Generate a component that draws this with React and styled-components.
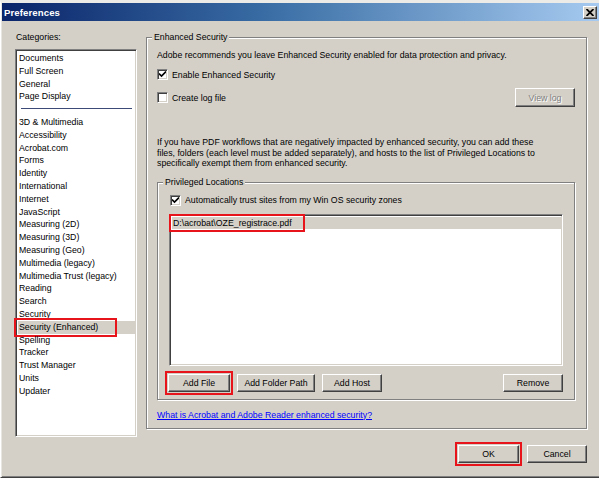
import React from 'react';
import styled, { createGlobalStyle } from 'styled-components';

const GlobalStyle = createGlobalStyle`
  html, body {
    margin: 0;
    padding: 0;
    background: #d4d0c8;
  }
  body {
    font-family: "Liberation Sans", Arial, sans-serif;
    font-size: 8.75px;
    color: #000;
  }
  * { box-sizing: border-box; }
`;

const Window = styled.div`
  width: 599px;
  height: 478px;
  display: flex;
  flex-direction: column;
  background: #d4d0c8;
  border-top: 3px solid #ecebe7;
  border-left: 1px solid #fff;
  border-bottom: 1px solid #404040;
  box-shadow: inset 1px 0 0 #e8e6e0, inset 0 -1px 0 #808080;
  padding-left: 1px;
  overflow: hidden;
`;

const TitleBar = styled.div`
  height: 18px;
  flex: none;
  display: flex;
  align-items: center;
  justify-content: space-between;
  padding: 0 2px 0 2px;
  background: linear-gradient(to right, #0a246a 0%, #3a6ea5 45%, #a6caf0 100%);
`;

const Title = styled.span`
  color: #fff;
  font-weight: bold;
  font-size: 9.6px;
  letter-spacing: 0.1px;
`;

const CloseButton = styled.div`
  width: 14px;
  height: 13px;
  display: flex;
  align-items: center;
  justify-content: center;
  background: #d4d0c8;
  border: 1px solid;
  border-color: #fff #404040 #404040 #fff;
  box-shadow: inset -1px -1px 0 #808080;
`;

const Body = styled.div`
  flex: 1;
  display: flex;
  gap: 9px;
  padding: 11px 12px 0 13px;
`;

const Sidebar = styled.div`
  width: 122px;
  flex: none;
  display: flex;
  flex-direction: column;
`;

const Label = styled.div`
  height: 11px;
  line-height: 11px;
  padding-left: 1px;
`;

const Sunken = styled.div`
  background: #fff;
  border: 1px solid;
  border-color: #808080 #fff #fff #808080;
  box-shadow: inset 1px 1px 0 #404040, inset -1px -1px 0 #d4d0c8;
`;

const CategoryList = styled(Sunken)`
  margin-top: 6px;
  height: 388px;
  padding: 2px 1px 0 2px;
`;

const CategoryItem = styled.div`
  height: 12.8px;
  line-height: 12.8px;
  padding-left: 1px;
  white-space: nowrap;
  background: ${p => (p.$selected ? '#d4d0c8' : 'transparent')};
`;

const Separator = styled.div`
  height: 12.8px;
  display: flex;
  align-items: center;
  padding: 0 3px 0 3px;
  &::after {
    content: '';
    flex: 1;
    height: 1px;
    margin-top: -3px;
    background: #3c4a78;
  }
`;

/* red annotation frame drawn round an item */
const Marked = styled.span`
  display: inline-block;
  padding: 0 ${p => p.$right}px 0 ${p => p.$left}px;
  margin-left: -${p => p.$left}px;
  outline: 2px solid #e8141b;
  outline-offset: 1px;
`;

const Main = styled.div`
  flex: 1;
  display: flex;
  flex-direction: column;
  padding-top: 5px;
`;

const GroupBox = styled.div`
  position: relative;
  border: 1px solid #808080;
  box-shadow: inset 1px 1px 0 #fff, 1px 1px 0 #fff;
  padding: ${p => p.$pad};
  margin: ${p => p.$margin || '0'};
`;

const Legend = styled.span`
  position: absolute;
  top: -6px;
  left: 5px;
  padding: 0 2px;
  line-height: 11px;
  background: #d4d0c8;
`;

const Text = styled.div`
  line-height: ${p => p.$lh || '11px'};
  margin-top: ${p => p.$mt || '0'};
`;

const CheckRow = styled.label`
  display: flex;
  align-items: center;
  gap: 4px;
  height: ${p => p.$h || '13px'};
  margin-top: ${p => p.$mt || '0'};
  margin-left: ${p => p.$ml || '0'};
`;

const Box = styled.span`
  width: 11px;
  height: 11px;
  flex: none;
  display: flex;
  align-items: center;
  justify-content: center;
  background: #fff;
  border: 1px solid;
  border-color: #808080 #fff #fff #808080;
  box-shadow: inset 1px 1px 0 #404040, inset -1px -1px 0 #d4d0c8;
`;

const Spacer = styled.div`
  flex: 1;
`;

const Button = styled.button`
  width: ${p => p.$w}px;
  height: ${p => p.$h || 18}px;
  padding: 0;
  font: inherit;
  color: ${p => (p.disabled ? '#808080' : '#000')};
  text-shadow: ${p => (p.disabled ? '1px 1px 0 #fff' : 'none')};
  background: #d4d0c8;
  border: 1px solid;
  border-color: #fff #404040 #404040 #fff;
  box-shadow: inset -1px -1px 0 #808080;
  outline: ${p => (p.$marked ? '2px solid #e8141b' : 'none')};
  outline-offset: 1px;
`;

const LocationList = styled(Sunken)`
  margin: 7px 0 0 1px;
  height: 152px;
  padding: 2px 1px 0 2px;
`;

const LocationItem = styled.div`
  height: 12px;
  line-height: 12px;
  padding-left: 1px;
  background: #d4d0c8;
`;

const ButtonRow = styled.div`
  display: flex;
  gap: 7px;
  margin-top: 8px;
`;

const Link = styled.a`
  display: block;
  margin-top: 10px;
  line-height: 11px;
  color: #0000ff;
  text-decoration: underline;
`;

const Footer = styled.div`
  display: flex;
  justify-content: flex-end;
  gap: 8px;
  margin-top: 16px;
`;

const categories = [
  'Documents', 'Full Screen', 'General', 'Page Display', '-',
  '3D & Multimedia', 'Accessibility', 'Acrobat.com', 'Forms', 'Identity',
  'International', 'Internet', 'JavaScript', 'Measuring (2D)', 'Measuring (3D)',
  'Measuring (Geo)', 'Multimedia (legacy)', 'Multimedia Trust (legacy)', 'Reading',
  'Search', 'Security', 'Security (Enhanced)', 'Spelling', 'Tracker',
  'Trust Manager', 'Units', 'Updater',
];

const Check = () => (
  <svg width="7" height="7" viewBox="0 0 7 7">
    <path d="M0 2.5 L2.5 5 L7 0.5" fill="none" stroke="#000" strokeWidth="1.6" />
  </svg>
);

const Checkbox = ({ checked, children, ...rest }) => (
  <CheckRow {...rest}>
    <Box>{checked && <Check />}</Box>
    <span>{children}</span>
  </CheckRow>
);

export default function App() {
  return (
    <>
      <GlobalStyle />
      <Window>
        <TitleBar>
          <Title>Preferences</Title>
          <CloseButton>
            <svg width="8" height="7" viewBox="0 0 8 7">
              <path d="M0.5 0 L7.5 7 M7.5 0 L0.5 7" stroke="#000" strokeWidth="1.8" />
            </svg>
          </CloseButton>
        </TitleBar>
        <Body>
          <Sidebar>
            <Label>Categories:</Label>
            <CategoryList>
              {categories.map((c, i) =>
                c === '-' ? (
                  <Separator key={i} />
                ) : c === 'Security (Enhanced)' ? (
                  <CategoryItem key={i} $selected>
                    <Marked $left={2} $right={16}>{c}</Marked>
                  </CategoryItem>
                ) : (
                  <CategoryItem key={i}>{c}</CategoryItem>
                )
              )}
            </CategoryList>
          </Sidebar>
          <Main>
            <GroupBox $pad="12px 11px 7px 10px">
              <Legend>Enhanced Security</Legend>
              <Text>Adobe recommends you leave Enhanced Security enabled for data protection and privacy.</Text>
              <Checkbox checked $mt="7px">Enable Enhanced Security</Checkbox>
              <CheckRow $h="19px" $mt="7px">
                <Box />
                <span>Create log file</span>
                <Spacer />
                <Button $w={60} $h={19} disabled>View log</Button>
              </CheckRow>
              <Text $lh="10.5px" $mt="30px">
                If you have PDF workflows that are negatively impacted by enhanced security, you can add these<br />
                files, folders (each level must be added separately), and hosts to the list of Privileged Locations to<br />
                specifically exempt them from enhanced security.
              </Text>
              <GroupBox $pad="11px 11px 7px 10px" $margin="13px 0 0 0">
                <Legend>Privileged Locations</Legend>
                <Checkbox checked $ml="2px">Automatically trust sites from my Win OS security zones</Checkbox>
                <LocationList>
                  <LocationItem>
                    <Marked $left={1} $right={10}>D:\acrobat\OZE_registrace.pdf</Marked>
                  </LocationItem>
                </LocationList>
                <ButtonRow>
                  <Button $w={62} $marked>Add File</Button>
                  <Button $w={78}>Add Folder Path</Button>
                  <Button $w={60}>Add Host</Button>
                  <Spacer />
                  <Button $w={60}>Remove</Button>
                </ButtonRow>
              </GroupBox>
              <Link href="#">What is Acrobat and Adobe Reader enhanced security?</Link>
            </GroupBox>
            <Footer>
              <Button $w={61} $marked>OK</Button>
              <Button $w={60}>Cancel</Button>
            </Footer>
          </Main>
        </Body>
      </Window>
    </>
  );
}
